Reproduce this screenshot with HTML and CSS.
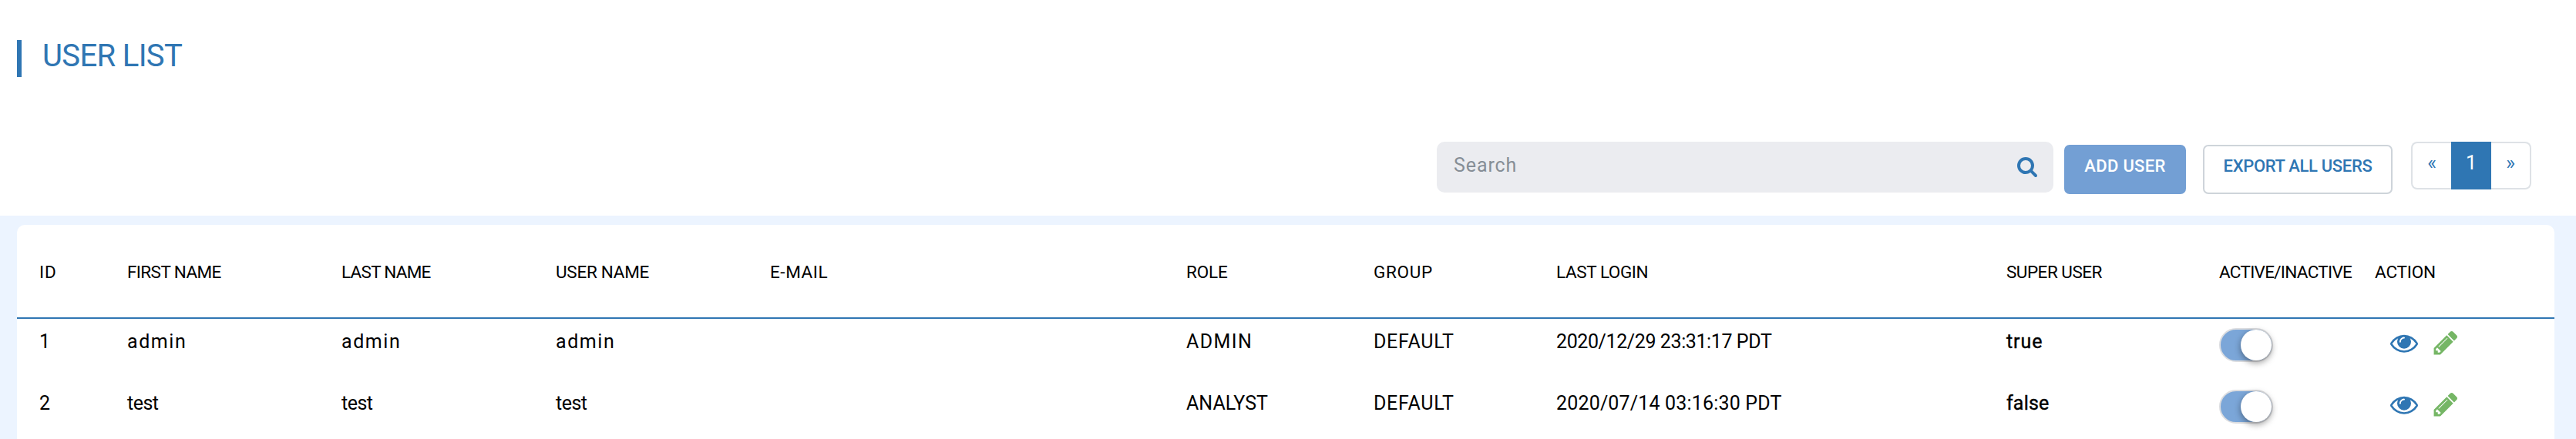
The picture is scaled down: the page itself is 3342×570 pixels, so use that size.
FILE: index.html
```
<!DOCTYPE html>
<html lang="en">
<head>
<meta charset="utf-8">
<title>User List</title>
<link rel="stylesheet" href="styles.css">
</head>
<body>
<svg class="sprite" aria-hidden="true">
  <symbol id="eye" viewBox="0 0 1792 1792"><path d="M1664 960q-152-236-381-353 61 104 61 225 0 185-131.500 316.500t-316.500 131.500-316.500-131.500-131.500-316.500q0-121 61-225-229 117-381 353 133 205 333.500 326.500t434.500 121.500 434.500-121.500 333.500-326.500zm-720-384q0-20-14-34t-34-14q-125 0-214.500 89.500t-89.500 214.500q0 20 14 34t34 14 34-14 14-34q0-86 61-147t147-61q20 0 34-14t14-34zm848 384q0 34-20 69-140 230-376.500 368.500t-499.500 138.500-499.500-139-376.500-368q-20-35-20-69t20-69q140-229 376.500-368t499.500-139 499.500 139 376.500 368q20 35 20 69z"/></symbol>
  <symbol id="pencil" viewBox="0 0 1792 1792"><path d="M491 1536l91-91-235-235-91 91v107h128v128h107zm523-928q0-22-22-22-10 0-17 7l-542 542q-7 7-7 17 0 22 22 22 10 0 17-7l542-542q7-7 7-17zm-54-192l416 416-832 832h-416v-416zm683 96q0 53-37 90l-166 166-416-416 166-165q36-38 90-38 53 0 91 38l235 234q37 39 37 91z"/></symbol>
  <symbol id="search" viewBox="0 0 1792 1792"><path d="M1216 832q0-185-131.500-316.500t-316.500-131.500-316.500 131.500-131.500 316.500 131.500 316.500 316.500 131.500 316.500-131.500 131.500-316.500zm512 832q0 52-38 90t-90 38q-54 0-90-38l-343-342q-179 124-399 124-143 0-273.500-55.500t-225-150-150-225-55.500-273.500 55.500-273.500 150-225 225-150 273.500-55.500 273.500 55.500 225 150 150 225 55.500 273.500q0 220-124 399l343 343q37 37 37 90z"/></symbol>
</svg>
<header class="page-head">
  <h1 class="title">USER LIST</h1>
</header>
<div class="toolbar">
  <div class="search"><span class="placeholder">Search</span><svg class="search-icon"><use href="#search"/></svg></div>
  <button class="btn btn-primary">ADD USER</button>
  <button class="btn btn-outline">EXPORT ALL USERS</button>
  <nav class="pages">
    <a class="page">«</a><a class="page active">1</a><a class="page">»</a>
  </nav>
</div>
<main class="band">
  <section class="card">
    <div class="row head">
      <span class="t-id">ID</span><span class="t-first">FIRST NAME</span><span class="t-last">LAST NAME</span><span class="t-user">USER NAME</span><span class="t-mail">E-MAIL</span><span class="t-role">ROLE</span><span class="t-group">GROUP</span><span class="t-login">LAST LOGIN</span><span class="t-super">SUPER USER</span><span class="t-active">ACTIVE/INACTIVE</span><span class="t-action">ACTION</span>
    </div>
    <div class="row item">
      <span>1</span><span class="v-admin">admin</span><span class="v-admin">admin</span><span class="v-admin">admin</span><span></span><span class="v-role">ADMIN</span><span class="v-group">DEFAULT</span><span class="v-date-a">2020/12/29 23:31:17 PDT</span><span class="v-true">true</span><span class="toggle"><i class="knob"></i></span><span class="actions"><svg class="icon view"><use href="#eye"/></svg><svg class="icon edit"><use href="#pencil"/></svg></span>
    </div>
    <div class="row item">
      <span>2</span><span class="v-test">test</span><span class="v-test">test</span><span class="v-test">test</span><span></span><span class="v-analyst">ANALYST</span><span class="v-group">DEFAULT</span><span class="v-date-b">2020/07/14 03:16:30 PDT</span><span class="v-false">false</span><span class="toggle"><i class="knob"></i></span><span class="actions"><svg class="icon view"><use href="#eye"/></svg><svg class="icon edit"><use href="#pencil"/></svg></span>
    </div>
  </section>
</main>
</body>
</html>
```
FILE: styles.css
```
* { box-sizing: border-box; }
body {
  margin: 0;
  height: 570px;
  overflow: hidden;
  display: flex;
  flex-direction: column;
  background: #fff;
  color: #000;
  font: 400 25px/30px Roboto, "Liberation Sans", sans-serif;
}
.sprite { display: none; }

.page-head { flex: none; height: 184px; padding: 52px 22px 0; }
.title {
  margin: 0;
  height: 48px;
  padding-left: 27px;
  border-left: 6px solid #2f76b3;
  color: #2f76b3;
  font-size: 40px;
  font-weight: 400;
  line-height: 42px;
  letter-spacing: -0.65px;
}

.toolbar {
  flex: none;
  height: 96px;
  padding-right: 58px;
  display: flex;
  justify-content: flex-end;
  align-items: flex-start;
}
.search {
  width: 800px;
  height: 66px;
  margin-right: 14px;
  padding: 16px 20px 0 22px;
  display: flex;
  justify-content: space-between;
  border-radius: 10px;
  background: #ebecf0;
}
.placeholder { color: #868e96; letter-spacing: 0.9px; }
.search-icon { width: 28px; height: 28px; margin-top: 2px; fill: #2f76b3; }
.btn {
  height: 64px;
  margin: 4px 0 0;
  padding: 0 0 8px;
  border: 2px solid;
  border-radius: 7px;
  font: 500 22px/30px Roboto, "Liberation Sans", sans-serif;
}
.btn-primary {
  width: 158px;
  margin-right: 22px;
  border-color: #739fd4;
  background: #739fd4;
  color: #fff;
  letter-spacing: 0.34px;
}
.btn-outline {
  width: 246px;
  margin-right: 24px;
  border-color: #ced4da;
  background: #fff;
  color: #2f76b3;
  letter-spacing: -0.33px;
}
.pages { width: 156px; height: 62px; display: flex; }
.page {
  width: 52px;
  padding-top: 11px;
  border: 2px solid #dee2e6;
  color: #2f76b3;
  text-align: center;
}
.page:first-child { border-right: 0; border-radius: 8px 0 0 8px; }
.page:last-child { border-left: 0; border-radius: 0 8px 8px 0; }
.page.active { border-color: #2f76b3; background: #2f76b3; color: #fff; }

.band { flex: none; height: 290px; padding: 12px 28px 0 22px; background: #ecf4ff; }
.card { height: 278px; overflow: hidden; border-radius: 10px 10px 0 0; background: #fff; }
.row {
  display: grid;
  grid-template-columns: 114px 278px 278px 278px 540px 243px 237px 584px 276px 202px 1fr;
  padding-left: 29px;
  white-space: nowrap;
}
.head {
  height: 122px;
  padding-top: 46px;
  border-bottom: 2px solid #2f76b3;
  font-size: 22.5px;
}
.item { height: 80px; padding-top: 15px; }

.t-id { letter-spacing: 1px; }
.t-first { letter-spacing: -0.6px; }
.t-last { letter-spacing: -0.74px; }
.t-user { letter-spacing: -0.28px; }
.t-mail { letter-spacing: 0.57px; }
.t-role { letter-spacing: -0.15px; }
.t-group { letter-spacing: 0.68px; }
.t-login { letter-spacing: -0.41px; }
.t-super { letter-spacing: -0.51px; }
.t-active { letter-spacing: -0.71px; }
.t-action { letter-spacing: -0.18px; }
.v-admin { letter-spacing: 1.57px; }
.v-test { letter-spacing: -0.5px; }
.v-role { letter-spacing: 1.41px; }
.v-group { letter-spacing: 0.7px; }
.v-analyst { letter-spacing: 0.02px; }
.v-date-a { letter-spacing: -0.4px; }
.v-date-b { letter-spacing: 0.17px; }
.v-true { letter-spacing: 0.9px; -webkit-text-stroke: 0.4px #000; }
.v-false { letter-spacing: 0.18px; -webkit-text-stroke: 0.4px #000; }

.toggle {
  width: 70px;
  height: 44px;
  margin-top: -3px;
  display: flex;
  justify-content: flex-end;
  border: 2px solid #dcdde0;
  border-radius: 22px;
  background: #7ba6d8;
}
.knob {
  width: 40px;
  height: 40px;
  border-radius: 50%;
  background: #fff;
  box-shadow: 0 3px 8px rgba(0, 0, 0, 0.4);
}
.actions { display: flex; padding-left: 20px; gap: 17.500px; }
.icon { width: 36px; height: 36px; margin-top: -2px; }
.view { fill: #2f76b3; }
.edit { fill: #75b665; }
```
